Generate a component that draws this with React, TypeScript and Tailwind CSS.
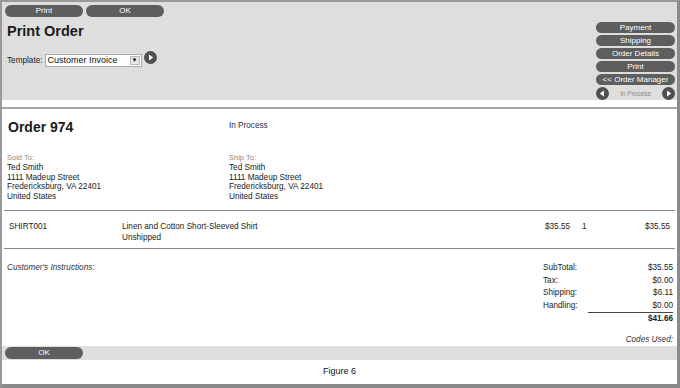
const Pill = ({ label, className = "" }: { label: string; className?: string }) => (
  <div
    className={`flex h-[12px] items-center justify-center rounded-full bg-[#5e5e5e] text-[8px] leading-none text-white ${className}`}
  >
    {label}
  </div>
);

const RoundArrow = ({ dir }: { dir: "left" | "right" }) => (
  <svg width="13" height="13" viewBox="0 0 13 13">
    <circle cx="6.5" cy="6.5" r="6.5" fill="#4f4f4f" />
    {dir === "right" ? (
      <path d="M5 3.5 L9.2 6.5 L5 9.5 Z" fill="#fff" />
    ) : (
      <path d="M8 3.5 L3.8 6.5 L8 9.5 Z" fill="#fff" />
    )}
  </svg>
);

const Address = ({ label }: { label: string }) => (
  <div className="text-[8.2px] leading-[9.8px] text-[#222]">
    <div className="text-[7.5px] text-[#8a8a8a]">{label}</div>
    <div>Ted Smith</div>
    <div>1111 Madeup Street</div>
    <div>Fredericksburg, VA 22401</div>
    <div>United States</div>
  </div>
);

const totals = [
  { label: "SubTotal:", value: "$35.55" },
  { label: "Tax:", value: "$0.00" },
  { label: "Shipping:", value: "$6.11" },
  { label: "Handling:", value: "$0.00" },
];

const App = () => {
  return (
    <div
      className="flex h-[388px] w-[680px] flex-col border-b-[4px] border-l-2 border-r-[3px] border-t-2 border-b-[#8a8a8a] border-l-[#9a9a9a] border-r-[#8a8a8a] border-t-[#9a9a9a] bg-white text-[#222]"
      style={{ fontFamily: '"Liberation Sans", Arial, sans-serif' }}
    >
      {/* top toolbar panel */}
      <div className="flex h-[98px] justify-between bg-[#dedede] pl-[3px] pr-[2px] pt-[3px]">
        <div className="flex flex-col">
          <div className="flex gap-[3px]">
            <Pill label="Print" className="w-[78px]" />
            <Pill label="OK" className="w-[78px]" />
          </div>
          <h1 className="ml-[2px] mt-[5px] text-[14.5px] font-bold leading-[18px] text-[#1a1a1a]">Print Order</h1>
          <div className="ml-[2px] mt-[11px] flex items-start gap-[2px]">
            <span className="mt-[4px] text-[8.2px] text-[#222]">Template:</span>
            <div className="mt-[3px] flex h-[13px] w-[97px] items-center justify-between border border-[#aaa] bg-white pl-[2px]">
              <span className="text-[9px] text-[#111]">Customer Invoice</span>
              <span className="mr-[1px] flex h-[9px] w-[10px] items-center justify-center border border-[#bbb] bg-[#e8e8e8] text-[6px] text-black">
                ▼
              </span>
            </div>
            <RoundArrow dir="right" />
          </div>
        </div>
        <div className="flex w-[79px] flex-col gap-[2px] pt-[17px]">
          <Pill label="Payment" className="h-[11px]" />
          <Pill label="Shipping" className="h-[11px]" />
          <Pill label="Order Details" className="h-[11px]" />
          <Pill label="Print" className="h-[11px]" />
          <Pill label="<< Order Manager" className="h-[11px]" />
          <div className="flex items-center justify-between">
            <RoundArrow dir="left" />
            <span className="text-[6.5px] text-[#888]">In Process</span>
            <RoundArrow dir="right" />
          </div>
        </div>
      </div>

      <div className="mt-[7px] border-t-2 border-[#a5a5a5]" />

      {/* order header */}
      <div className="flex h-[101px] px-[5px] pt-[9px]">
        <div className="w-[222px]">
          <h2 className="ml-[1px] text-[14px] font-bold leading-[18px] text-[#1a1a1a]">Order 974</h2>
          <div className="mt-[17px]">
            <Address label="Sold To:" />
          </div>
        </div>
        <div>
          <div className="mt-[3px] text-[8.2px] leading-[10px] text-[#2a2a40]">In Process</div>
          <div className="mt-[22px]">
            <Address label="Ship To:" />
          </div>
        </div>
      </div>

      <div className="mx-[2px] border-t border-[#888]" />

      {/* line item */}
      <div className="flex h-[37px] px-[7px] pt-[10px] text-[8.2px] leading-[11px] text-[#222]">
        <div className="w-[113px]">SHIRT001</div>
        <div className="w-[423px]">
          <div>Linen and Cotton Short-Sleeved Shirt</div>
          <div>Unshipped</div>
        </div>
        <div className="w-[37px]">$35.55</div>
        <div>1</div>
        <div className="ml-auto">$35.55</div>
      </div>

      <div className="mx-[2px] border-t border-[#888]" />

      {/* instructions and totals */}
      <div className="flex h-[97px] justify-between pl-[5px] pr-[4px] pt-[13px] text-[8.2px] leading-[12.5px]">
        <div className="italic text-[#333]">Customer's Instructions:</div>
        <div className="flex w-[130px] flex-col">
          {totals.map((t) => (
            <div key={t.label} className="flex justify-between">
              <span>{t.label}</span>
              <span>{t.value}</span>
            </div>
          ))}
          <div className="ml-auto w-[85px] border-t border-[#444]" />
          <div className="text-right font-bold">$41.66</div>
          <div className="mt-[8px] text-right italic text-[#333]">Codes Used:</div>
        </div>
      </div>

      {/* bottom bar */}
      <div className="flex h-[14px] items-center bg-[#dedede] pl-[3px]">
        <Pill label="OK" className="w-[78px]" />
      </div>

      <div className="flex flex-1 items-center justify-center text-[9px] text-[#111]">Figure 6</div>
    </div>
  );
};

export default App;
